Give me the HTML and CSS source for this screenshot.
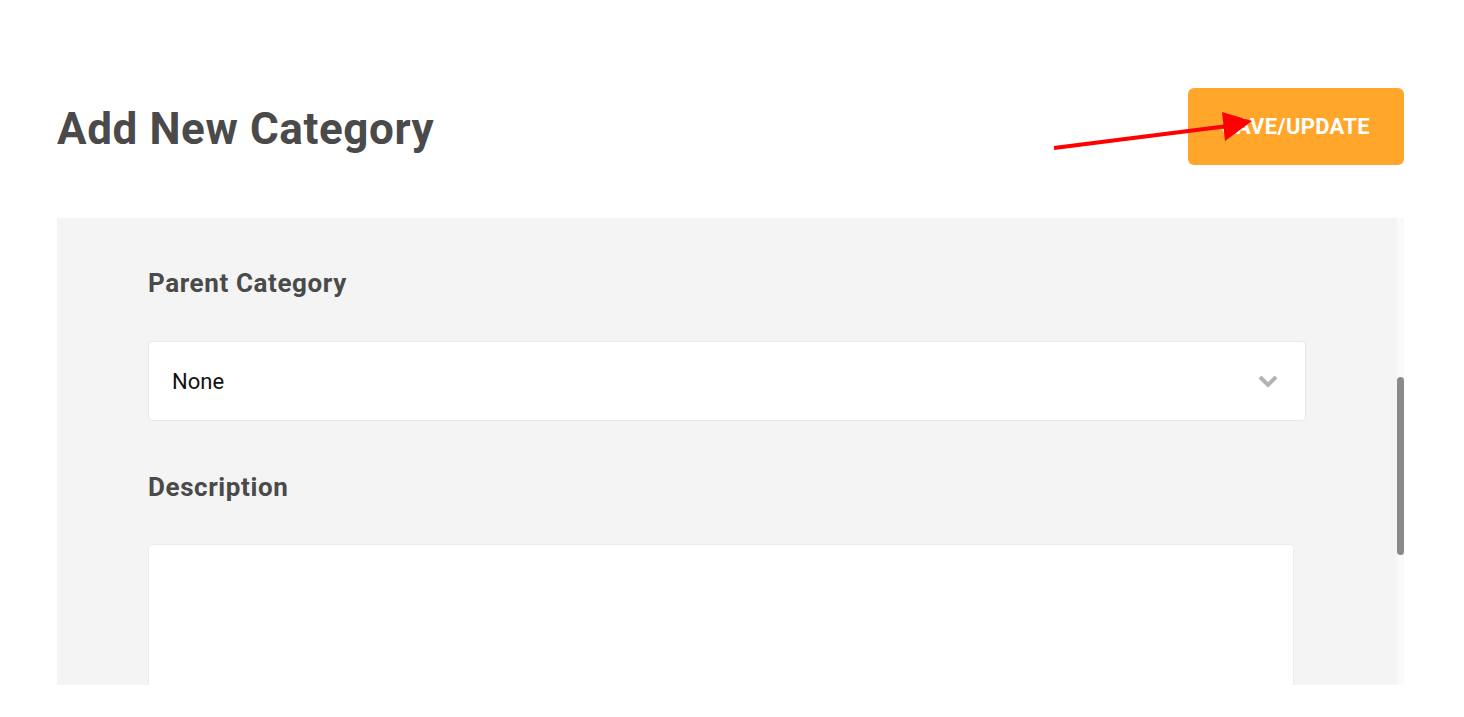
FILE: index.html
```html
<!DOCTYPE html>
<html lang="en">
<head>
  <meta charset="UTF-8" />
  <title>Add New Category</title>
  <link rel="stylesheet" href="styles.css">
</head>
<body>
  <div class="page">
    <div class="page-header">
      <h1>Add New Category</h1>
      <button type="button" class="btn-save">SAVE/UPDATE</button>
    </div>

    <div class="content">
      <div class="panel">
        <div class="form-group">
          <label>Parent Category</label>
          <div class="select-box">
            <span>None</span>
            <svg class="chevron" width="22" height="14" viewBox="0 0 22 14">
              <polyline points="3,3 11,11 19,3" fill="none" stroke="#b3b3b3" stroke-width="4" />
            </svg>
          </div>
        </div>

        <div class="form-group">
          <label for="description">Description</label>
          <textarea id="description" name="description"></textarea>
        </div>
      </div>
      <div class="scroll-track">
        <div class="scroll-thumb"></div>
      </div>
    </div>

    <svg class="annotation" width="1464" height="717" viewBox="0 0 1464 717">
      <line x1="1054" y1="148" x2="1228" y2="126" stroke="#ff0000" stroke-width="4" />
      <polygon points="1222,112 1225,141 1252,121" fill="#ff0000" />
    </svg>
  </div>
</body>
</html>
```

FILE: styles.css
```css
body {
  margin: 0;
  background: #fff;
  font-family: Roboto, "Liberation Sans", sans-serif;
  color: #4a4a4a;
}

.page {
  position: relative;
  width: 1347px;
  margin-left: 57px;
  padding-top: 88px;
}

.page-header {
  display: flex;
  justify-content: space-between;
  align-items: center;
  height: 77px;
}

h1 {
  margin: 0;
  padding-top: 5px;
  font-size: 44px;
  font-weight: 700;
  letter-spacing: 0.6px;
  color: #4a4a4a;
}

.btn-save {
  width: 216px;
  height: 77px;
  background-color: #ffa62b;
  color: #fff;
  border: none;
  border-radius: 6px;
  font-family: Roboto, "Liberation Sans", sans-serif;
  font-size: 22px;
  font-weight: 700;
  letter-spacing: 0.3px;
  cursor: pointer;
}

.content {
  display: flex;
  margin-top: 53px;
  height: 467px;
}

.panel {
  flex: 1;
  background: #f4f4f4;
  padding: 49px 91px 0 91px;
  overflow: hidden;
}

.form-group label {
  display: block;
  font-size: 26px;
  line-height: 32px;
  font-weight: 700;
  letter-spacing: 0.6px;
  color: #4a4a4a;
}

.select-box {
  display: flex;
  justify-content: space-between;
  align-items: center;
  height: 78px;
  margin-top: 42px;
  padding: 0 26px 0 23px;
  background: #fff;
  border: 1px solid #e8e8e8;
  border-radius: 4px;
  font-size: 22px;
  color: #111;
}

.form-group + .form-group {
  margin-top: 50px;
}

textarea {
  display: block;
  width: 1146px;
  height: 240px;
  margin-top: 41px;
  box-sizing: border-box;
  background: #fff;
  border: 1px solid #ececec;
  border-radius: 4px;
  resize: none;
}

.scroll-track {
  width: 7px;
  background: #f9fafc;
}

.scroll-thumb {
  margin-top: 159px;
  height: 178px;
  background: #8a8a8a;
  border-radius: 4px;
}

.annotation {
  position: absolute;
  left: -57px;
  top: 0;
  pointer-events: none;
}
```
